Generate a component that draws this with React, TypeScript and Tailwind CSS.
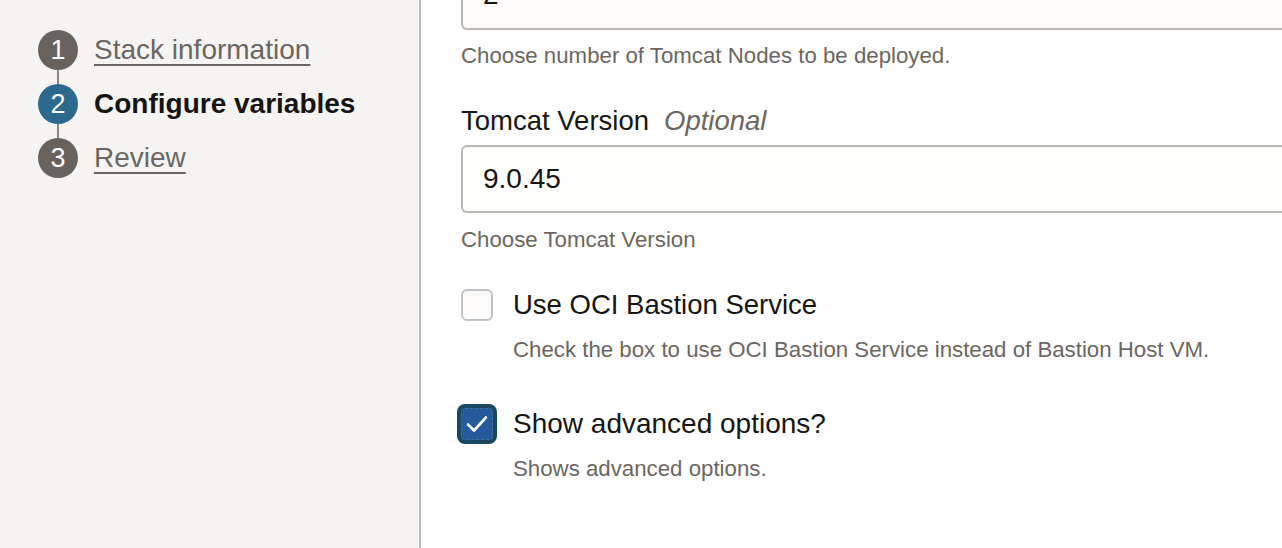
import React from "react";

function Step({ n, label, active }: { n: number; label: string; active?: boolean }) {
  return (
    <div className="flex items-center h-[40px]">
      <div
        className={
          "w-[40px] h-[40px] rounded-full flex items-center justify-center text-white text-[27px] " +
          (active ? "bg-[#2b6a8e]" : "bg-[#68615c]")
        }
      >
        {n}
      </div>
      <span
        className={
          "ml-[16px] text-[28px] " +
          (active ? "font-bold text-[#161513]" : "text-[#6b6661] underline underline-offset-[5px] decoration-[2px]")
        }
      >
        {label}
      </span>
    </div>
  );
}

export default function App() {
  return (
    <div
      className="flex w-[1282px] h-[548px] overflow-hidden bg-white"
      style={{ fontFamily: '"Liberation Sans", Arial, sans-serif' }}
    >
      <aside className="w-[421px] shrink-0 bg-[#f5f4f2] border-r-2 border-[#b9bec4] pt-[30px] pl-[38px]">
        <Step n={1} label="Stack information" />
        <div className="ml-[19px] w-[2px] h-[14px] bg-[#8b8682]" />
        <Step n={2} label="Configure variables" active />
        <div className="ml-[19px] w-[2px] h-[14px] bg-[#8b8682]" />
        <Step n={3} label="Review" />
      </aside>
      <main className="flex-1 pl-[40px] text-[#161513]">
        <div className="h-[70px] -mt-[40px] border-2 border-r-0 border-[#bdb7b1] rounded-l-[6px] bg-[#fcfbfa] flex items-end pl-[20px]">
          <span className="text-[28px] leading-[32px] mb-[17px]">2</span>
        </div>
        <p className="mt-[13px] text-[22.25px] text-[#6b6661] leading-[26px]">
          Choose number of Tomcat Nodes to be deployed.
        </p>
        <div className="mt-[36px] flex items-baseline text-[27.5px] leading-[32px]">
          <span>Tomcat Version</span>
          <span className="ml-[15px] italic text-[#6b6661]">Optional</span>
        </div>
        <div className="mt-[8px] h-[68px] border-2 border-r-0 border-[#bdb7b1] rounded-l-[6px] bg-[#fefefd] flex items-center pl-[20px] text-[28px]">
          9.0.45
        </div>
        <p className="mt-[14px] text-[22.25px] text-[#6b6661] leading-[26px]">Choose Tomcat Version</p>
        <div className="mt-[36px] flex items-center h-[32px]">
          <div className="w-[32px] h-[32px] rounded-[6px] border-2 border-[#c0c3c7] bg-[#fcfbfa]" />
          <span className="ml-[20px] text-[27.5px] leading-[32px]">Use OCI Bastion Service</span>
        </div>
        <p className="mt-[16px] ml-[52px] text-[22.25px] text-[#6b6661] leading-[26px]">
          Check the box to use OCI Bastion Service instead of Bastion Host VM.
        </p>
        <div className="mt-[41px] flex items-center h-[40px]">
          <div className="-ml-[4px] w-[40px] h-[40px] rounded-[8px] bg-[#1c4760] p-[4px]">
            <div className="w-full h-full rounded-[4px] bg-[#24599a] border border-dashed border-[#3f6f99] flex items-center justify-center">
              <svg width="22" height="18" viewBox="0 0 22 18" fill="none">
                <path d="M2 9.5 L8 15.5 L20 2.5" stroke="white" strokeWidth="2.6" strokeLinecap="round" strokeLinejoin="round" />
              </svg>
            </div>
          </div>
          <span className="ml-[16px] text-[28px] leading-[32px]">Show advanced options?</span>
        </div>
        <p className="mt-[12px] ml-[52px] text-[22.25px] text-[#6b6661] leading-[26px]">Shows advanced options.</p>
      </main>
    </div>
  );
}
